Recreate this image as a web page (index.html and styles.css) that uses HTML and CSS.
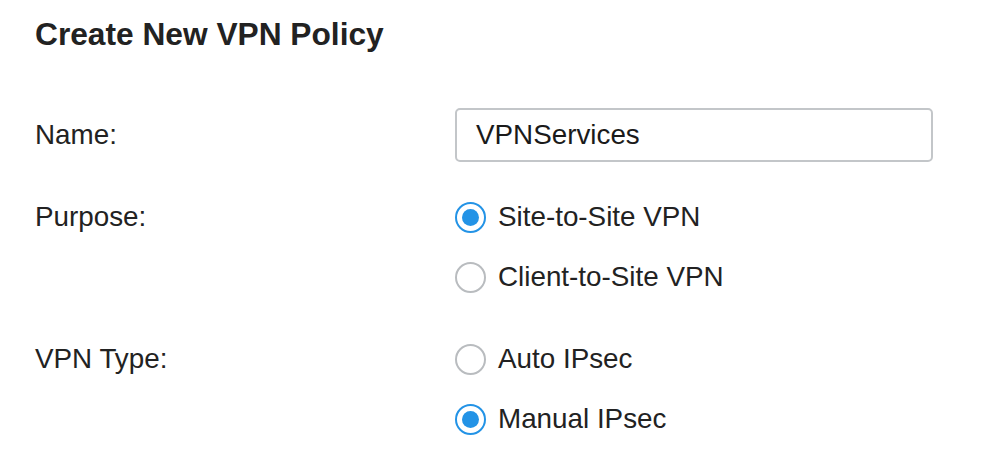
FILE: index.html
```html
<!DOCTYPE html>
<html>
<head>
<meta charset="utf-8">
<link rel="stylesheet" href="styles.css">
</head>
<body>
<div class="page">
  <h1 class="title">Create New VPN Policy</h1>
  <div class="row row-name">
    <div class="label">Name:</div>
    <div class="control">
      <div class="input">VPNServices</div>
    </div>
  </div>
  <div class="row">
    <div class="label">Purpose:</div>
    <div class="control options">
      <div class="option"><span class="radio checked"></span><span>Site-to-Site VPN</span></div>
      <div class="option"><span class="radio"></span><span>Client-to-Site VPN</span></div>
    </div>
  </div>
  <div class="row">
    <div class="label">VPN Type:</div>
    <div class="control options">
      <div class="option"><span class="radio"></span><span>Auto IPsec</span></div>
      <div class="option"><span class="radio checked"></span><span>Manual IPsec</span></div>
    </div>
  </div>
</div>
</body>
</html>
```
FILE: styles.css
```css
* { box-sizing: border-box; }
html, body { margin: 0; padding: 0; background: #fff; }
body {
  font-family: "Liberation Sans", Arial, Helvetica, sans-serif;
  color: #222;
}
.page {
  padding: 16px 0 0 35px;
  width: 998px;
}
.title {
  margin: 0 0 53px 0;
  font-size: 31.7px;
  line-height: 36px;
  font-weight: bold;
  color: #222;
}
.row {
  display: flex;
  align-items: flex-start;
  margin-bottom: 22px;
}
.label {
  width: 420px;
  flex: none;
  font-size: 27.8px;
  line-height: 60px;
}
.control { flex: none; }
.input {
  width: 478px;
  height: 54px;
  margin-top: 3px;
  border: 2px solid #c3c6c9;
  border-radius: 5px;
  padding-left: 19px;
  font-size: 27.8px;
  line-height: 50px;
  color: #1a1a1a;
}
.options { display: flex; flex-direction: column; }
.option {
  display: flex;
  align-items: center;
  height: 60px;
  font-size: 27.8px;
  gap: 12px;
}
.radio {
  width: 31px;
  height: 31px;
  border-radius: 50%;
  border: 2px solid #b9bcbf;
  background: #fff;
  flex: none;
  display: flex;
  align-items: center;
  justify-content: center;
}
.radio.checked { border-color: #2393e6; }
.radio.checked::after {
  content: "";
  width: 17px;
  height: 17px;
  border-radius: 50%;
  background: #2393e6;
}
```
